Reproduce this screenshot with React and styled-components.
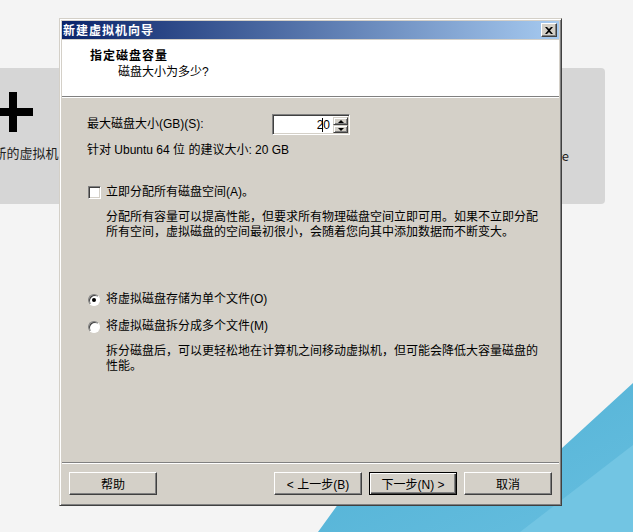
import React from "react";
import styled, { createGlobalStyle } from "styled-components";

const Global = createGlobalStyle`
  html, body { margin: 0; padding: 0; }
  body {
    width: 633px; height: 532px; overflow: hidden; background: #f4f4f4;
    font-family: "Liberation Sans", "Noto Sans CJK SC", sans-serif;
  }
`;

const Desktop = styled.div`
  position: relative;
  width: 633px;
  height: 532px;
  overflow: hidden;
  background: #f4f4f4;
`;

const Backdrop = styled.svg`
  position: absolute;
  left: 0;
  top: 0;
`;

const CardRow = styled.div`
  position: relative;
  display: flex;
  padding-top: 68px;
`;

const HomeCard = styled.div`
  box-sizing: border-box;
  width: ${(p) => p.$w}px;
  height: 136px;
  background: #d6d6d6;
  border-radius: 4px;
  display: flex;
  flex-direction: column;
  align-items: ${(p) => (p.$end ? "flex-end" : "center")};
  padding: ${(p) => (p.$end ? "80px 36px 0 0" : "24px 0 0 0")};
  margin-left: ${(p) => p.$ml};
  margin-right: ${(p) => p.$mr || "0"};
`;

const CardLabel = styled.div`
  font-family: "Noto Sans CJK SC", sans-serif;
  font-size: 13px;
  line-height: 16px;
  color: #1e1e1e;
  margin-top: ${(p) => p.$mt || 0}px;
  white-space: nowrap;
`;

const Dialog = styled.div`
  position: absolute;
  left: 59px;
  top: 18px;
  width: 503px;
  height: 488px;
  box-sizing: border-box;
  background: #d4d0c8;
  border: 1px solid;
  border-color: #d4d0c8 #404040 #404040 #d4d0c8;
  box-shadow: inset 1px 1px 0 #ffffff, inset -1px -1px 0 #808080;
  padding: 2px;
  display: flex;
  flex-direction: column;
  font-size: 12px;
  color: #000;
`;

const TitleBar = styled.div`
  height: 18px;
  margin-bottom: 1px;
  background: linear-gradient(to right, #0a246a, #a6caf0);
  display: flex;
  align-items: center;
  justify-content: space-between;
  padding: 0 2px 0 1px;
`;

const TitleText = styled.span`
  font-family: "Noto Sans CJK SC", sans-serif;
  font-weight: 700;
  font-size: 12px;
  letter-spacing: 1px;
  color: #ffffff;
  line-height: 18px;
`;

const CloseButton = styled.div`
  box-sizing: border-box;
  width: 16px;
  height: 14px;
  background: #d4d0c8;
  border: 1px solid;
  border-color: #ffffff #404040 #404040 #ffffff;
  box-shadow: inset -1px -1px 0 #808080;
  display: flex;
  align-items: center;
  justify-content: center;
`;

const Header = styled.div`
  height: 56px;
  box-sizing: border-box;
  background: #ffffff;
  padding: 7px 0 0 28px;
  display: flex;
  flex-direction: column;
`;

const HeaderTitle = styled.div`
  font-family: "Noto Sans CJK SC", sans-serif;
  font-weight: 700;
  font-size: 12px;
  letter-spacing: 1px;
  line-height: 15px;
`;

const HeaderSub = styled.div`
  font-size: 12px;
  line-height: 15px;
  margin: 3px 0 0 28px;
`;

const Rule = styled.div`
  height: 0;
  border-top: 1px solid #808080;
  border-bottom: 1px solid #ffffff;
`;

const Body = styled.div`
  flex: 1;
  display: flex;
  flex-direction: column;
  padding: 0 25px;
`;

const Row = styled.div`
  display: flex;
  align-items: center;
  line-height: 15px;
  white-space: nowrap;
  margin-top: ${(p) => p.$mt}px;
`;

const FieldLabel = styled.span`
  width: 185px;
`;

const SpinBox = styled.div`
  box-sizing: border-box;
  width: 78px;
  height: 21px;
  display: flex;
  background: #ffffff;
  border: 1px solid;
  border-color: #808080 #ffffff #ffffff #808080;
  box-shadow: inset 1px 1px 0 #404040, inset -1px -1px 0 #d4d0c8;
  padding: 2px 1px 1px 2px;
`;

const SpinValue = styled.div`
  flex: 1;
  display: flex;
  align-items: center;
  justify-content: flex-end;
  padding-right: 3px;
  font-size: 12px;
`;

const Caret = styled.span`
  display: inline-block;
  width: 1px;
  height: 14px;
  background: #000;
  margin: 0 0 0 -1px;
`;

const SpinButtons = styled.div`
  width: 15px;
  display: flex;
  flex-direction: column;
`;

const SpinButton = styled.div`
  flex: 1;
  box-sizing: border-box;
  background: #d4d0c8;
  border: 1px solid;
  border-color: #d4d0c8 #404040 #404040 #d4d0c8;
  box-shadow: inset 1px 1px 0 #ffffff, inset -1px -1px 0 #808080;
  display: flex;
  align-items: center;
  justify-content: center;
`;

const Arrow = styled.span`
  width: 0;
  height: 0;
  border-left: 3px solid transparent;
  border-right: 3px solid transparent;
  ${(p) =>
    p.$up
      ? "border-bottom: 3px solid #000;"
      : "border-top: 3px solid #000;"}
`;

const CheckBox = styled.span`
  box-sizing: border-box;
  width: 13px;
  height: 13px;
  margin: 0 5px 0 1px;
  background: #ffffff;
  border: 1px solid;
  border-color: #808080 #ffffff #ffffff #808080;
  box-shadow: inset 1px 1px 0 #404040, inset -1px -1px 0 #d4d0c8;
`;

const Radio = styled.span`
  box-sizing: border-box;
  width: 12px;
  height: 12px;
  margin: 0 6px 0 1px;
  border-radius: 50%;
  background: #ffffff;
  border: 1px solid;
  border-color: #808080 #ffffff #ffffff #808080;
  box-shadow: inset 1px 1px 0 #404040;
  display: flex;
  align-items: center;
  justify-content: center;
  &::after {
    content: "";
    width: 4px;
    height: 4px;
    border-radius: 50%;
    background: ${(p) => (p.$on ? "#000" : "transparent")};
  }
`;

const Note = styled.p`
  margin: ${(p) => p.$mt}px 0 0 19px;
  line-height: 15px;
  font-size: 12px;
  white-space: nowrap;
`;

const Footer = styled.div`
  display: flex;
  flex-direction: column;
`;

const ButtonBar = styled.div`
  display: flex;
  gap: 7px;
  padding: 8px 7px 8px 7px;
`;

const Spacer = styled.div`
  flex: 1;
`;

const PushButton = styled.div`
  box-sizing: border-box;
  width: 88px;
  height: 23px;
  background: #d4d0c8;
  display: flex;
  align-items: center;
  justify-content: center;
  font-size: 12px;
  border: 1px solid;
  border-color: ${(p) => (p.$default ? "#000" : "#ffffff #404040 #404040 #ffffff")};
  box-shadow: ${(p) =>
    p.$default
      ? "inset 1px 1px 0 #ffffff, inset -1px -1px 0 #404040, inset -2px -2px 0 #808080"
      : "inset -1px -1px 0 #808080"};
`;

export default function App() {
  return (
    <>
      <Global />
      <Desktop>
        <Backdrop width="633" height="532" viewBox="0 0 633 532">
          <defs>
            <linearGradient id="teal" x1="0" y1="0" x2="1" y2="1">
              <stop offset="0" stopColor="#4fb0d4" />
              <stop offset="1" stopColor="#66bedf" />
            </linearGradient>
          </defs>
          <polygon points="318,532 370,460 561,449 633,383 633,532" fill="url(#teal)" />
          <polygon points="520,532 633,445 633,532" fill="#72c5e3" />
        </Backdrop>
        <CardRow>
          <HomeCard $w={170} $ml="-72px">
            <svg width="40" height="40" viewBox="0 0 40 40">
              <rect x="16" y="0" width="8" height="40" fill="#000" />
              <rect x="0" y="16" width="40" height="8" fill="#000" />
            </svg>
            <CardLabel $mt={13}>创建新的虚拟机</CardLabel>
          </HomeCard>
          <HomeCard $w={145} $ml="auto" $mr="28px" $end>
            <CardLabel>vSphere</CardLabel>
          </HomeCard>
        </CardRow>

        <Dialog>
          <TitleBar>
            <TitleText>新建虚拟机向导</TitleText>
            <CloseButton>
              <svg width="8" height="7" viewBox="0 0 8 7">
                <path d="M0 0 L2 0 L4 2 L6 0 L8 0 L5 3.5 L8 7 L6 7 L4 5 L2 7 L0 7 L3 3.5 Z" fill="#000" />
              </svg>
            </CloseButton>
          </TitleBar>
          <Header>
            <HeaderTitle>指定磁盘容量</HeaderTitle>
            <HeaderSub>磁盘大小为多少?</HeaderSub>
          </Header>
          <Rule />
          <Body>
            <Row $mt={16}>
              <FieldLabel>最大磁盘大小(GB)(S):</FieldLabel>
              <SpinBox>
                <SpinValue>
                  2<Caret />0
                </SpinValue>
                <SpinButtons>
                  <SpinButton>
                    <Arrow $up />
                  </SpinButton>
                  <SpinButton>
                    <Arrow />
                  </SpinButton>
                </SpinButtons>
              </SpinBox>
            </Row>
            <Row $mt={8}>针对 Ubuntu 64 位 的建议大小: 20 GB</Row>
            <Row $mt={27}>
              <CheckBox />
              立即分配所有磁盘空间(A)。
            </Row>
            <Note $mt={10}>
              分配所有容量可以提高性能，但要求所有物理磁盘空间立即可用。如果不立即分配
              <br />
              所有空间，虚拟磁盘的空间最初很小，会随着您向其中添加数据而不断变大。
            </Note>
            <Row $mt={52}>
              <Radio $on />
              将虚拟磁盘存储为单个文件(O)
            </Row>
            <Row $mt={12}>
              <Radio />
              将虚拟磁盘拆分成多个文件(M)
            </Row>
            <Note $mt={10}>
              拆分磁盘后，可以更轻松地在计算机之间移动虚拟机，但可能会降低大容量磁盘的
              <br />
              性能。
            </Note>
          </Body>
          <Footer>
            <Rule />
            <ButtonBar>
              <PushButton>帮助</PushButton>
              <Spacer />
              <PushButton>&lt; 上一步(B)</PushButton>
              <PushButton $default>下一步(N) &gt;</PushButton>
              <PushButton>取消</PushButton>
            </ButtonBar>
          </Footer>
        </Dialog>
      </Desktop>
    </>
  );
}
